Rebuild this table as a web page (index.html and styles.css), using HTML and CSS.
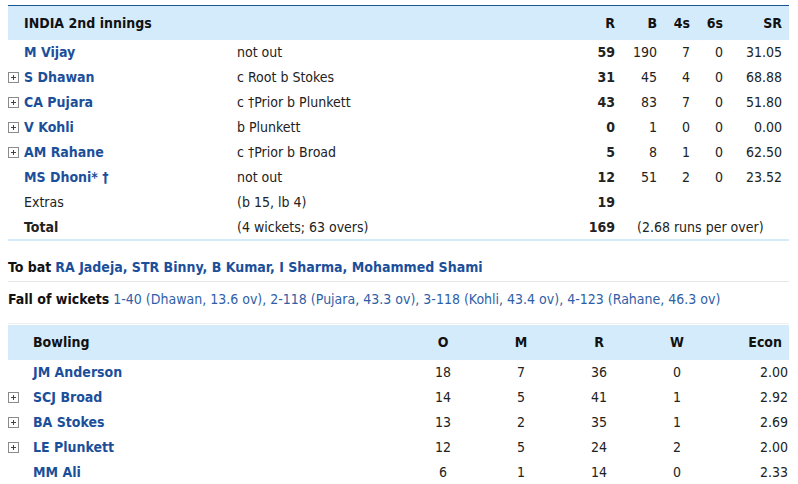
FILE: index.html
```html
<!DOCTYPE html>
<html>
<head>
<meta charset="utf-8">
<link rel="stylesheet" href="styles.css">
</head>
<body>
<div class="card">
  <table class="bat">
    <colgroup>
      <col class="c-ico"><col class="c-name"><col class="c-dis"><col class="c-r"><col class="c-b"><col class="c-4"><col class="c-6"><col class="c-sr">
    </colgroup>
    <thead>
      <tr>
        <th></th><th class="left" colspan="2">INDIA 2nd innings</th><th>R</th><th>B</th><th>4s</th><th>6s</th><th class="sr">SR</th>
      </tr>
    </thead>
    <tbody>
      <tr><td></td><td class="player">M Vijay</td><td>not out</td><td class="runs">59</td><td>190</td><td>7</td><td>0</td><td class="sr">31.05</td></tr>
      <tr><td><span class="plus"></span></td><td class="player">S Dhawan</td><td>c Root b Stokes</td><td class="runs">31</td><td>45</td><td>4</td><td>0</td><td class="sr">68.88</td></tr>
      <tr><td><span class="plus"></span></td><td class="player">CA Pujara</td><td>c †Prior b Plunkett</td><td class="runs">43</td><td>83</td><td>7</td><td>0</td><td class="sr">51.80</td></tr>
      <tr><td><span class="plus"></span></td><td class="player">V Kohli</td><td>b Plunkett</td><td class="runs">0</td><td>1</td><td>0</td><td>0</td><td class="sr">0.00</td></tr>
      <tr><td><span class="plus"></span></td><td class="player">AM Rahane</td><td>c †Prior b Broad</td><td class="runs">5</td><td>8</td><td>1</td><td>0</td><td class="sr">62.50</td></tr>
      <tr><td></td><td class="player">MS Dhoni* †</td><td>not out</td><td class="runs">12</td><td>51</td><td>2</td><td>0</td><td class="sr">23.52</td></tr>
      <tr><td></td><td>Extras</td><td>(b 15, lb 4)</td><td class="runs">19</td><td colspan="4"></td></tr>
      <tr class="total"><td></td><td class="bold">Total</td><td>(4 wickets; 63 overs)</td><td class="runs">169</td><td class="rpo" colspan="4">(2.68 runs per over)</td></tr>
    </tbody>
  </table>

  <div class="tobat"><span class="label">To bat</span> <span class="names">RA Jadeja, STR Binny, B Kumar, I Sharma, Mohammed Shami</span></div>
  <div class="fow"><span class="label">Fall of wickets</span>&nbsp;<span class="fowtext">1-40 (Dhawan, 13.6 ov), 2-118 (Pujara, 43.3 ov), 3-118 (Kohli, 43.4 ov), 4-123 (Rahane, 46.3 ov)</span></div>

  <table class="bowl">
    <colgroup>
      <col class="b-ico"><col class="b-name"><col class="b-n"><col class="b-n"><col class="b-n"><col class="b-n"><col class="b-econ">
    </colgroup>
    <thead>
      <tr><th></th><th class="left">Bowling</th><th>O</th><th>M</th><th>R</th><th>W</th><th class="econ">Econ</th></tr>
    </thead>
    <tbody>
      <tr><td></td><td class="player">JM Anderson</td><td>18</td><td>7</td><td>36</td><td>0</td><td class="econ">2.00</td></tr>
      <tr><td><span class="plus"></span></td><td class="player">SCJ Broad</td><td>14</td><td>5</td><td>41</td><td>1</td><td class="econ">2.92</td></tr>
      <tr><td><span class="plus"></span></td><td class="player">BA Stokes</td><td>13</td><td>2</td><td>35</td><td>1</td><td class="econ">2.69</td></tr>
      <tr><td><span class="plus"></span></td><td class="player">LE Plunkett</td><td>12</td><td>5</td><td>24</td><td>2</td><td class="econ">2.00</td></tr>
      <tr><td></td><td class="player">MM Ali</td><td>6</td><td>1</td><td>14</td><td>0</td><td class="econ">2.33</td></tr>
    </tbody>
  </table>
</div>
</body>
</html>
```

FILE: styles.css
```css
html, body {
  margin: 0;
  padding: 0;
  background: #ffffff;
}
body {
  padding: 5px 9px 0 8px;
  font-family: "DejaVu Sans Condensed", "DejaVu Sans", sans-serif;
  font-size: 14px;
  color: #222222;
}
.card {
  width: 781px;
}
table {
  width: 781px;
  border-collapse: collapse;
  table-layout: fixed;
}
th, td {
  padding: 0;
  white-space: nowrap;
}
.bat {
  border-top: 1px solid #1b5590;
  border-bottom: 2px solid #d4ebfb;
}
.bat thead tr {
  background: #d4ebfb;
  height: 34px;
}
.bat th {
  font-weight: bold;
  text-align: right;
  color: #111;
}
.bat th.left, .bowl th.left { text-align: left; }
.bat tbody tr { height: 25px; }
.bat td { text-align: right; }
.bat td:nth-child(2), .bat td:nth-child(3) { text-align: left; }
.c-ico { width: 16px; }
.c-name { width: 213px; }
.c-dis { width: 338px; }
.c-r { width: 40px; }
.c-b { width: 42px; }
.c-4 { width: 33px; }
.c-6 { width: 33px; }
.c-sr { width: 66px; }
.sr { padding-right: 7px; }
.player {
  color: #1c4f9a;
  font-weight: bold;
}
.runs { font-weight: bold; }
.bold { font-weight: bold; }
.bat td.rpo { text-align: left; padding-left: 22px; }
.plus {
  display: inline-block;
  width: 9px;
  height: 9px;
  border: 1px solid #8a8a8a;
  position: relative;
  vertical-align: -1px;
  background: #fff;
}
.plus::before, .plus::after {
  content: "";
  position: absolute;
  background: #444;
}
.plus::before { left: 2px; top: 4px; width: 5px; height: 1px; }
.plus::after { left: 4px; top: 2px; width: 1px; height: 5px; }
.bat td:first-child, .bowl td:first-child { text-align: left; }

.tobat {
  height: 41px;
  box-sizing: border-box;
  padding-top: 18px;
  border-bottom: 1px solid #e6e6e6;
  line-height: 16px;
}
.label { font-weight: bold; color: #111; }
.names { color: #1c4f9a; font-weight: bold; }
.fow {
  height: 42px;
  box-sizing: border-box;
  padding-top: 9px;
  border-bottom: 1px solid #f0f0f0;
  line-height: 16px;
}
.fowtext { color: #2f5fa8; }

.bowl thead tr {
  background: #d4ebfb;
  height: 35px;
}
.bowl { margin-top: 1px; }
.bowl th { font-weight: bold; text-align: center; color: #111; }
.bowl tbody tr { height: 25px; }
.bowl td { text-align: center; }
.b-ico { width: 25px; }
.b-name { width: 371px; }
.b-n { width: 78px; }
.b-econ { width: 73px; }
.bowl td.player { text-align: left; }
.bowl th.econ { text-align: right; padding-right: 7px; }
.bowl td.econ { text-align: right; padding-right: 1px; }
```
